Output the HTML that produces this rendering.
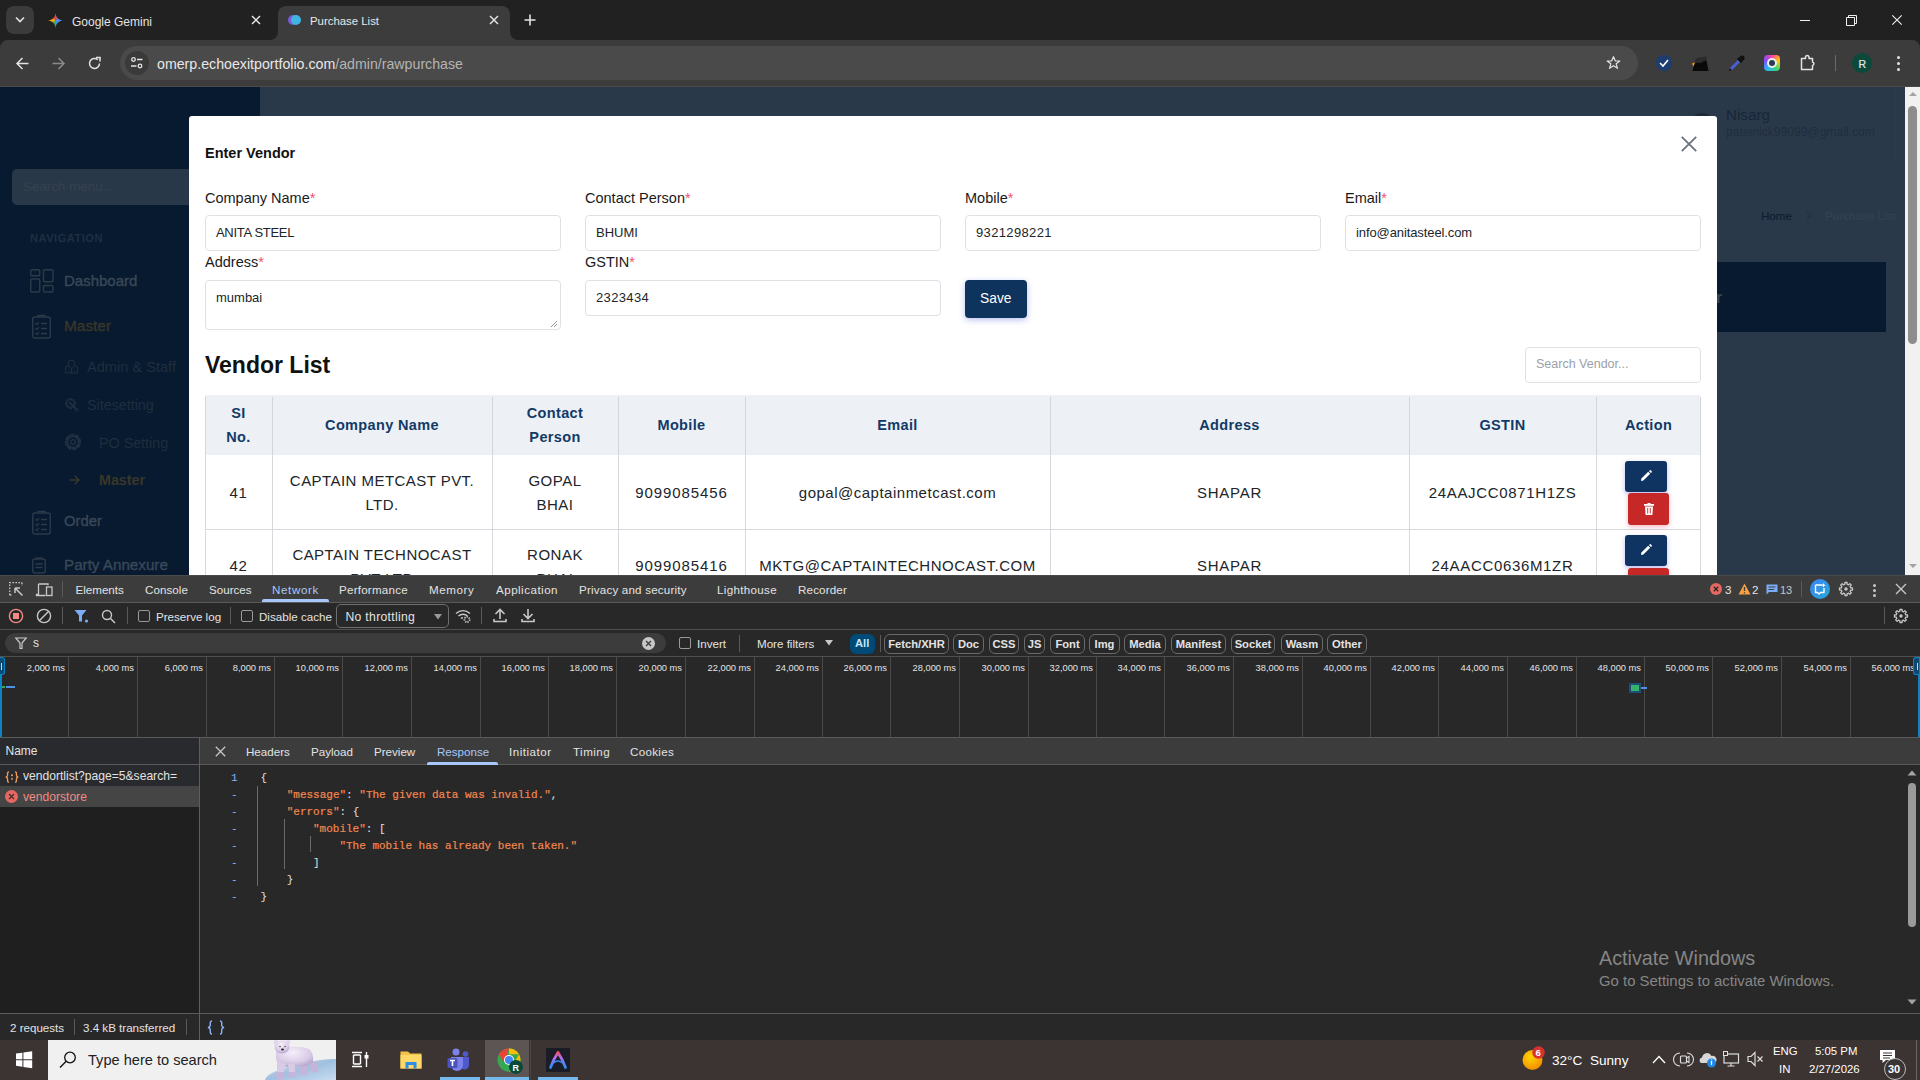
<!DOCTYPE html>
<html><head><meta charset="utf-8">
<style>
*{box-sizing:border-box;margin:0;padding:0}
html,body{width:1920px;height:1080px;overflow:hidden;background:#202120;font-family:"Liberation Sans",sans-serif}
.a{position:absolute}
.t{position:absolute;white-space:nowrap;line-height:1}
svg{position:absolute;overflow:visible}
.s{color:#f5874f;-webkit-text-stroke:0.2px #f5874f}
</style></head><body>
<!-- ============ CHROME TAB STRIP ============ -->
<div class="a" style="left:0;top:0;width:1920px;height:40px;background:#202120"></div>
<div class="a" style="left:6px;top:6px;width:28px;height:28px;border-radius:8px;background:#3b3b3b"></div>
<svg style="left:15px;top:16px" width="10" height="8"><path d="M1 1.5 L5 5.5 L9 1.5" stroke="#e3e3e3" stroke-width="1.6" fill="none"/></svg>
<!-- Gemini tab -->
<div class="a" style="left:48px;top:13px;width:15px;height:15px;background:conic-gradient(from 0deg,#e8453c 0deg,#4c8bf5 70deg,#4c8bf5 150deg,#34a853 200deg,#f6b400 270deg,#e8453c 340deg);clip-path:path('M7.5 0 C8 4.5 10.5 7 15 7.5 C10.5 8 8 10.5 7.5 15 C7 10.5 4.5 8 0 7.5 C4.5 7 7 4.5 7.5 0Z')"></div>
<div class="t" style="left:72px;top:15.5px;font-size:12px;color:#e3e3e3">Google Gemini</div>
<svg style="left:251px;top:15px" width="10" height="10"><path d="M1 1L9 9M9 1L1 9" stroke="#e3e3e3" stroke-width="1.5"/></svg>
<!-- active tab -->
<div class="a" style="left:278px;top:6px;width:232px;height:34px;background:#3c3c3c;border-radius:8px 8px 0 0"></div>
<div class="a" style="left:270px;top:32px;width:8px;height:8px;background:#3c3c3c"></div>
<div class="a" style="left:262px;top:24px;width:16px;height:16px;background:#202120;border-radius:0 0 8px 0"></div>
<div class="a" style="left:510px;top:32px;width:8px;height:8px;background:#3c3c3c"></div>
<div class="a" style="left:510px;top:24px;width:16px;height:16px;background:#202120;border-radius:0 0 0 8px"></div>
<div class="a" style="left:288px;top:15px;width:10px;height:10px;border-radius:50%;background:#7a5ad6"></div>
<div class="a" style="left:291px;top:15px;width:10px;height:10px;border-radius:50%;background:#3fb6e0"></div>
<div class="t" style="left:310px;top:15.5px;font-size:11.4px;color:#e8e8e8">Purchase List</div>
<svg style="left:489px;top:15px" width="10" height="10"><path d="M1 1L9 9M9 1L1 9" stroke="#e3e3e3" stroke-width="1.5"/></svg>
<svg style="left:524px;top:14px" width="12" height="12"><path d="M6 0.5V11.5M0.5 6H11.5" stroke="#e3e3e3" stroke-width="1.6"/></svg>
<!-- window controls -->
<div class="a" style="left:1800px;top:20px;width:10px;height:1px;background:#f0f0f0"></div>
<svg style="left:1846px;top:15px" width="11" height="11"><path d="M0.5 2.5H8.5V10.5H0.5Z M2.5 2.5V0.5H10.5V8.5H8.5" stroke="#f0f0f0" stroke-width="1" fill="none"/></svg>
<svg style="left:1892px;top:15px" width="10" height="10"><path d="M0.3 0.3L9.7 9.7M9.7 0.3L0.3 9.7" stroke="#f0f0f0" stroke-width="1.1"/></svg>
<!-- ============ TOOLBAR ============ -->
<div class="a" style="left:0;top:40px;width:1920px;height:47px;background:#3c3c3c;border-radius:8px 8px 0 0"></div>
<div class="a" style="left:0;top:86px;width:1920px;height:1px;background:#4a4a4a"></div>
<svg style="left:16px;top:57px" width="13" height="13"><path d="M12.5 6.5H1.5M6.5 1L1 6.5L6.5 12" stroke="#e3e3e3" stroke-width="1.5" fill="none"/></svg>
<svg style="left:52px;top:57px" width="13" height="13"><path d="M0.5 6.5H11.5M6.5 1L12 6.5L6.5 12" stroke="#8a8a8a" stroke-width="1.5" fill="none"/></svg>
<svg style="left:88px;top:57px" width="13" height="13"><path d="M11.5 6.5A5 5 0 1 1 9.8 2.7" stroke="#e3e3e3" stroke-width="1.5" fill="none"/><path d="M8 0.5H12V4.5" stroke="#e3e3e3" stroke-width="1.5" fill="none"/></svg>
<div class="a" style="left:120px;top:46px;width:1518px;height:34px;border-radius:17px;background:#4a4a4a"></div>
<div class="a" style="left:125px;top:51px;width:24px;height:24px;border-radius:50%;background:#3a3a3a"></div>
<svg style="left:130px;top:56px" width="14" height="14"><circle cx="3.5" cy="3.5" r="1.8" stroke="#e3e3e3" stroke-width="1.3" fill="none"/><path d="M7 3.5H12.5M1 10H6.5" stroke="#e3e3e3" stroke-width="1.5"/><circle cx="10" cy="10" r="1.8" stroke="#e3e3e3" stroke-width="1.3" fill="none"/></svg>
<div class="t" style="left:157px;top:56.5px;font-size:14.2px;color:#e8e8e8">omerp.echoexitportfolio.com<span style="color:#b4b4b4">/admin/rawpurchase</span></div>
<svg style="left:1605px;top:55px" width="17" height="16" viewBox="0 0 24 24"><path d="M12 2.5L14.8 9H21.5L16 13.2L18 20L12 16L6 20L8 13.2L2.5 9H9.2Z" stroke="#e3e3e3" stroke-width="1.8" fill="none" stroke-linejoin="round"/></svg>
<!-- extension icons -->
<div class="a" style="left:1656px;top:55px;width:16px;height:16px;border-radius:50%;background:#1d3d70"></div>
<svg style="left:1659px;top:59px" width="10" height="8"><path d="M1 4L4 7L9 1" stroke="#fff" stroke-width="1.6" fill="none"/></svg>
<svg style="left:1691px;top:54px" width="19" height="18"><path d="M4 8.5H11L13 6.5H15.5L17.5 17H1.5L3 11Z" fill="#0a0a0a"/><path d="M1 9.5L4 8.5L2.5 12.5Z" fill="#f39c12"/><path d="M4 9C4 5 6 3.5 9 3.5C11 3.5 12 2.5 15.5 2.5L16 6.5H13L11 8.5H4Z" fill="#2b2b2b"/></svg>
<svg style="left:1728px;top:54px" width="18" height="18"><path d="M2 16L11 7" stroke="#4a5fd6" stroke-width="3"/><path d="M1.5 16.5L3 15" stroke="#111" stroke-width="2"/><path d="M10 4L14 8" stroke="#111" stroke-width="3"/><circle cx="14" cy="4" r="2.6" fill="#111"/></svg>
<div class="a" style="left:1764px;top:55px;width:16px;height:16px;border-radius:4px;background:conic-gradient(#ff3fa4,#ffcc00,#37d67a,#29b6f6,#7c4dff,#ff3fa4)"></div>
<div class="a" style="left:1767px;top:58px;width:10px;height:10px;border-radius:50%;background:#eee"></div>
<div class="a" style="left:1769px;top:60px;width:6px;height:6px;border-radius:50%;background:#2b3a55"></div>
<svg style="left:1799px;top:54px" width="18" height="18"><path d="M2.5 4.5H6.5V3A1.8 1.8 0 0 1 10 3V4.5H13.5V8A1.8 1.8 0 0 1 13.5 11.5V15.5H2.5Z" stroke="#e3e3e3" stroke-width="1.5" fill="none" stroke-linejoin="round"/></svg>
<div class="a" style="left:1835px;top:55px;width:1px;height:16px;background:#6a6a6a"></div>
<div class="a" style="left:1852px;top:53px;width:20px;height:20px;border-radius:50%;background:#0b4a3a"></div>
<div class="t" style="left:1858.5px;top:59px;font-size:10.5px;color:#e6e6e6;-webkit-text-stroke:0.2px #e6e6e6">R</div>
<div class="a" style="left:1897px;top:56px;width:3px;height:3px;border-radius:50%;background:#e3e3e3"></div>
<div class="a" style="left:1897px;top:62px;width:3px;height:3px;border-radius:50%;background:#e3e3e3"></div>
<div class="a" style="left:1897px;top:68px;width:3px;height:3px;border-radius:50%;background:#e3e3e3"></div>

<!-- ============ PAGE ============ -->
<div id="page" class="a" style="left:0;top:87px;width:1920px;height:488px;background:#2a3949;overflow:hidden">
<!-- sidebar (coords relative to page top=87) -->
<div class="a" style="left:0;top:0;width:260px;height:488px;background:#071a2f"></div>
<div class="a" style="left:12px;top:82px;width:236px;height:36px;border-radius:5px;background:#293848"></div>
<div class="t" style="left:23px;top:93px;font-size:13.4px;color:#35434f">Search menu...</div>
<div class="t" style="left:30px;top:146px;font-size:11px;font-weight:700;letter-spacing:0.55px;color:#1f2f42">NAVIGATION</div>
<svg style="left:30px;top:182px" width="24" height="24"><rect x="0.75" y="0.75" width="9" height="6" rx="1.2" stroke="#2c3a4a" stroke-width="1.4" fill="none"/><rect x="13.5" y="0.75" width="9.5" height="12" rx="1.2" stroke="#2c3a4a" stroke-width="1.4" fill="none"/><rect x="0.75" y="10" width="9" height="13" rx="1.2" stroke="#2c3a4a" stroke-width="1.4" fill="none"/><rect x="13.5" y="16.5" width="9.5" height="6.5" rx="1.2" stroke="#2c3a4a" stroke-width="1.4" fill="none"/></svg>
<div class="t" style="left:64px;top:186px;font-size:15px;color:#3a4858;-webkit-text-stroke:0.35px #3a4858">Dashboard</div>
<svg style="left:32px;top:227px" width="20" height="25"><rect x="0.75" y="3" width="17.5" height="21" rx="2" stroke="#2c3a4a" stroke-width="1.4" fill="none"/><path d="M6 3V1.5H13V3" stroke="#2c3a4a" stroke-width="1.4" fill="none"/><path d="M3.5 9L5 10.5L7 8M3.5 14L5 15.5L7 13M3.5 19L5 20.5L7 18" stroke="#2c3a4a" stroke-width="1.2" fill="none"/><path d="M9 9.5H15M9 14.5H15M9 19.5H15" stroke="#2c3a4a" stroke-width="1.4"/></svg>
<div class="t" style="left:64px;top:231px;font-size:15.4px;color:#3a3629;-webkit-text-stroke:0.35px #3a3629">Master</div>
<svg style="left:65px;top:273px" width="13" height="14"><path d="M3.5 5V2.5A3 2.2 0 0 1 9.5 2.5V5" stroke="#1f2e3f" stroke-width="1.1" fill="none"/><path d="M0.6 13V7L3.5 5.5L6.5 9L9.5 5.5L12.4 7V13Z" stroke="#1f2e3f" stroke-width="1.1" fill="none" stroke-linejoin="round"/><path d="M6.5 9V13M3.5 10.5L5 12M9.5 10.5L8 12" stroke="#1f2e3f" stroke-width="1"/></svg>
<div class="t" style="left:87px;top:273px;font-size:14.6px;color:#1f2e3f">Admin &amp; Staff</div>
<svg style="left:65px;top:311px" width="14" height="14"><path d="M8.98 4.59 L10.42 4.62 L10.42 6.38 L8.98 6.41 L8.61 7.32 L9.60 8.36 L8.36 9.60 L7.32 8.61 L6.41 8.98 L6.38 10.42 L4.62 10.42 L4.59 8.98 L3.68 8.61 L2.64 9.60 L1.40 8.36 L2.39 7.32 L2.02 6.41 L0.58 6.38 L0.58 4.62 L2.02 4.59 L2.39 3.68 L1.40 2.64 L2.64 1.40 L3.68 2.39 L4.59 2.02 L4.62 0.58 L6.38 0.58 L6.41 2.02 L7.32 2.39 L8.36 1.40 L9.60 2.64 L8.61 3.68Z" stroke="#1f2e3f" stroke-width="1.3" fill="none" stroke-linejoin="round"/><path d="M4 4L11.5 11.5" stroke="#1f2e3f" stroke-width="2"/><circle cx="11.8" cy="11.8" r="1.6" stroke="#1f2e3f" stroke-width="1" fill="none"/></svg>
<div class="t" style="left:87px;top:311px;font-size:14.3px;color:#1f2e3f">Sitesetting</div>
<svg style="left:65px;top:347px" width="16" height="16"><path d="M14.71 4.43 L15.60 8.00 L13.48 9.16 L11.60 12.29 L15.27 10.22 L13.37 13.37 L11.05 12.70 L7.51 13.58 L11.57 14.71 L8.00 15.60 L6.84 13.48 L3.71 11.60 L5.78 15.27 L2.63 13.37 L3.30 11.05 L2.42 7.51 L1.29 11.57 L0.40 8.00 L2.52 6.84 L4.40 3.71 L0.73 5.78 L2.63 2.63 L4.95 3.30 L8.49 2.42 L4.43 1.29 L8.00 0.40 L9.16 2.52 L12.29 4.40 L10.22 0.73 L13.37 2.63 L12.70 4.95 L13.58 8.49Z" stroke="#233244" stroke-width="1.2" fill="none" stroke-linejoin="round"/><circle cx="8" cy="8" r="2.4" stroke="#233244" stroke-width="1.2" fill="none"/></svg>
<div class="t" style="left:99px;top:349px;font-size:14.3px;color:#1f2e3f">PO Setting</div>
<svg style="left:69px;top:388px" width="11" height="10"><path d="M0.5 5H10M5.5 0.8L10 5L5.5 9.2" stroke="#3a3629" stroke-width="1.4" fill="none"/></svg>
<div class="t" style="left:99px;top:386px;font-size:14.3px;font-weight:700;color:#3a3629">Master</div>
<svg style="left:32px;top:423px" width="20" height="25"><rect x="0.75" y="3" width="17.5" height="21" rx="2" stroke="#2c3a4a" stroke-width="1.4" fill="none"/><path d="M6 3V1.5H13V3" stroke="#2c3a4a" stroke-width="1.4" fill="none"/><path d="M3.5 9L5 10.5L7 8M3.5 14L5 15.5L7 13M3.5 19L5 20.5L7 18" stroke="#2c3a4a" stroke-width="1.2" fill="none"/><path d="M9 9.5H15M9 14.5H15M9 19.5H15" stroke="#2c3a4a" stroke-width="1.4"/></svg>
<div class="t" style="left:64px;top:427px;font-size:14.9px;color:#3a4858;-webkit-text-stroke:0.35px #3a4858">Order</div>
<svg style="left:32px;top:470px" width="14" height="17"><rect x="0.75" y="2" width="12.5" height="14" rx="2" stroke="#2c3a4a" stroke-width="1.4" fill="none"/><path d="M4 2V0.8H10V2M3.5 7H10.5M3.5 10.5H10.5" stroke="#2c3a4a" stroke-width="1.3" fill="none"/></svg>
<div class="t" style="left:64px;top:470px;font-size:15.2px;color:#3a4858;-webkit-text-stroke:0.35px #3a4858">Party Annexure</div>
<!-- main header -->
<div class="a" style="left:1690px;top:26px;width:24px;height:24px;border-radius:50%;background:#1c2a38"></div>
<div class="t" style="left:1726px;top:20px;font-size:15.2px;color:#17263a">Nisarg</div>
<div class="t" style="left:1726px;top:39px;font-size:12.1px;color:#1f2e40">patelnick99099@gmail.com</div>
<div class="a" style="left:260px;top:73px;width:1636px;height:1px;background:#283646"></div><div class="a" style="left:1895px;top:0px;width:1px;height:73px;background:#2c3a4a"></div>
<div class="t" style="left:1761px;top:123px;font-size:11.6px;color:#0e1d30;-webkit-text-stroke:0.2px #0e1d30">Home</div>
<svg style="left:1806px;top:124px" width="6" height="9"><path d="M1 1L5 4.5L1 8" stroke="#22313f" stroke-width="1.2" fill="none"/></svg>
<div class="t" style="left:1825px;top:123px;font-size:11.7px;color:#334353">Purchase List</div>
<div class="a" style="left:1600px;top:175px;width:286px;height:70px;background:#071a2f"></div>
<div class="t" style="left:1716px;top:203px;font-size:16px;font-weight:700;color:#384653">r</div>
<!-- page scrollbar -->
<div class="a" style="left:1905px;top:0;width:15px;height:488px;background:#f1f1f1"></div>
<svg style="left:1908px;top:4px" width="10" height="6"><path d="M1 5L5 1L9 5Z" fill="#a3a3a3"/></svg>
<div class="a" style="left:1908px;top:19px;width:9px;height:238px;border-radius:5px;background:#8d8d8d"></div>
<svg style="left:1908px;top:476px" width="10" height="6"><path d="M1 1L5 5L9 1Z" fill="#a3a3a3"/></svg>
<!-- ===== MODAL ===== -->
<div class="a" style="left:189px;top:29px;width:1528px;height:520px;background:#fff;border-radius:3px;overflow:hidden">
<div class="t" style="left:16px;top:29.5px;font-size:14.5px;font-weight:700;color:#111;letter-spacing:0px;">Enter Vendor</div>
<svg style="left:1492px;top:20px" width="16" height="16"><path d="M0.8 0.8L15.2 15.2M15.2 0.8L0.8 15.2" stroke="#6c757d" stroke-width="1.9"/></svg>
<div class="t" style="left:16px;top:75.4px;font-size:14.5px;font-weight:400;color:#1a1a1a;letter-spacing:0px;">Company Name<span style="color:#f0506e">*</span></div>
<div class="t" style="left:396px;top:75.4px;font-size:14.5px;font-weight:400;color:#1a1a1a;letter-spacing:0px;">Contact Person<span style="color:#f0506e">*</span></div>
<div class="t" style="left:776px;top:75.4px;font-size:14.5px;font-weight:400;color:#1a1a1a;letter-spacing:0px;">Mobile<span style="color:#f0506e">*</span></div>
<div class="t" style="left:1156px;top:75.4px;font-size:14.5px;font-weight:400;color:#1a1a1a;letter-spacing:0px;">Email<span style="color:#f0506e">*</span></div>
<div class="t" style="left:16px;top:139.4px;font-size:14.5px;font-weight:400;color:#1a1a1a;letter-spacing:0px;">Address<span style="color:#f0506e">*</span></div>
<div class="t" style="left:396px;top:139.4px;font-size:14.5px;font-weight:400;color:#1a1a1a;letter-spacing:0px;">GSTIN<span style="color:#f0506e">*</span></div>
<div class="a" style="left:16px;top:99px;width:356px;height:36px;border:1px solid #dee2e6;border-radius:4px;background:#fff"></div>
<div class="t" style="left:27px;top:110px;font-size:13px;font-weight:400;color:#212529;letter-spacing:-0.3px;">ANITA STEEL</div>
<div class="a" style="left:396px;top:99px;width:356px;height:36px;border:1px solid #dee2e6;border-radius:4px;background:#fff"></div>
<div class="t" style="left:407px;top:110px;font-size:13px;font-weight:400;color:#212529;letter-spacing:0px;">BHUMI</div>
<div class="a" style="left:776px;top:99px;width:356px;height:36px;border:1px solid #dee2e6;border-radius:4px;background:#fff"></div>
<div class="t" style="left:787px;top:110px;font-size:13px;font-weight:400;color:#212529;letter-spacing:0.35px;">9321298221</div>
<div class="a" style="left:1156px;top:99px;width:356px;height:36px;border:1px solid #dee2e6;border-radius:4px;background:#fff"></div>
<div class="t" style="left:1167px;top:110px;font-size:13px;font-weight:400;color:#212529;letter-spacing:-0.1px;">info@anitasteel.com</div>
<div class="a" style="left:396px;top:164px;width:356px;height:36px;border:1px solid #dee2e6;border-radius:4px;background:#fff"></div>
<div class="t" style="left:407px;top:175px;font-size:13px;font-weight:400;color:#212529;letter-spacing:0.35px;">2323434</div>
<div class="a" style="left:16px;top:164px;width:356px;height:50px;border:1px solid #dee2e6;border-radius:4px;background:#fff"></div>
<svg style="left:361px;top:204px" width="8" height="8"><path d="M7 1L1 7M7 4L4 7" stroke="#888" stroke-width="0.9"/></svg>
<div class="t" style="left:27px;top:175px;font-size:13px;font-weight:400;color:#212529;letter-spacing:0px;">mumbai</div>
<div class="a" style="left:776px;top:164px;width:62px;height:38px;border-radius:4px;background:#0e335d;box-shadow:0 2px 6px rgba(60,80,220,0.35)"></div>
<div class="t" style="left:791px;top:176px;font-size:13.8px;font-weight:400;color:#fff;letter-spacing:0px;">Save</div>
<div class="t" style="left:16px;top:237.5px;font-size:23px;font-weight:700;color:#111;letter-spacing:0px;">Vendor List</div>
<div class="a" style="left:1336px;top:231px;width:176px;height:36px;border:1px solid #dee2e6;border-radius:4px;background:#fff"></div>
<div class="t" style="left:1347px;top:242px;font-size:12.5px;font-weight:400;color:#9aa1a9;letter-spacing:0px;">Search Vendor...</div>
<div class="a" style="left:16px;top:279px;width:1495px;height:60px;background:#edf0f5"></div>
<div class="a" style="left:16px;top:281px;width:1px;height:58px;background:#d3d7dc"></div><div class="a" style="left:16px;top:339px;width:1px;height:240px;background:#d6d9dd"></div>
<div class="a" style="left:83px;top:281px;width:1px;height:58px;background:#d3d7dc"></div><div class="a" style="left:83px;top:339px;width:1px;height:240px;background:#d6d9dd"></div>
<div class="a" style="left:303px;top:281px;width:1px;height:58px;background:#d3d7dc"></div><div class="a" style="left:303px;top:339px;width:1px;height:240px;background:#d6d9dd"></div>
<div class="a" style="left:429px;top:281px;width:1px;height:58px;background:#d3d7dc"></div><div class="a" style="left:429px;top:339px;width:1px;height:240px;background:#d6d9dd"></div>
<div class="a" style="left:556px;top:281px;width:1px;height:58px;background:#d3d7dc"></div><div class="a" style="left:556px;top:339px;width:1px;height:240px;background:#d6d9dd"></div>
<div class="a" style="left:861px;top:281px;width:1px;height:58px;background:#d3d7dc"></div><div class="a" style="left:861px;top:339px;width:1px;height:240px;background:#d6d9dd"></div>
<div class="a" style="left:1220px;top:281px;width:1px;height:58px;background:#d3d7dc"></div><div class="a" style="left:1220px;top:339px;width:1px;height:240px;background:#d6d9dd"></div>
<div class="a" style="left:1407px;top:281px;width:1px;height:58px;background:#d3d7dc"></div><div class="a" style="left:1407px;top:339px;width:1px;height:240px;background:#d6d9dd"></div>
<div class="a" style="left:1511px;top:281px;width:1px;height:58px;background:#d3d7dc"></div><div class="a" style="left:1511px;top:339px;width:1px;height:240px;background:#d6d9dd"></div>
<div class="a" style="left:16px;top:413px;width:1495px;height:1px;background:#d6d9dd"></div>
<div class="t" style="left:16px;top:285px;width:67px;text-align:center;font-size:14.5px;line-height:24px;font-weight:700;color:#123a66;letter-spacing:0.35px">SI<br>No.</div>
<div class="t" style="left:83px;top:297px;width:220px;text-align:center;font-size:14.5px;line-height:24px;font-weight:700;color:#123a66;letter-spacing:0.35px">Company Name</div>
<div class="t" style="left:303px;top:285px;width:126px;text-align:center;font-size:14.5px;line-height:24px;font-weight:700;color:#123a66;letter-spacing:0.35px">Contact<br>Person</div>
<div class="t" style="left:429px;top:297px;width:127px;text-align:center;font-size:14.5px;line-height:24px;font-weight:700;color:#123a66;letter-spacing:0.35px">Mobile</div>
<div class="t" style="left:556px;top:297px;width:305px;text-align:center;font-size:14.5px;line-height:24px;font-weight:700;color:#123a66;letter-spacing:0.35px">Email</div>
<div class="t" style="left:861px;top:297px;width:359px;text-align:center;font-size:14.5px;line-height:24px;font-weight:700;color:#123a66;letter-spacing:0.35px">Address</div>
<div class="t" style="left:1220px;top:297px;width:187px;text-align:center;font-size:14.5px;line-height:24px;font-weight:700;color:#123a66;letter-spacing:0.35px">GSTIN</div>
<div class="t" style="left:1407px;top:297px;width:105px;text-align:center;font-size:14.5px;line-height:24px;font-weight:700;color:#123a66;letter-spacing:0.35px">Action</div>
<div class="t" style="left:16px;top:364.8px;width:67px;text-align:center;font-size:15px;line-height:24px;color:#212529;letter-spacing:0.6px">41</div>
<div class="t" style="left:83px;top:352.8px;width:220px;text-align:center;font-size:15px;line-height:24px;color:#212529;letter-spacing:0.45px">CAPTAIN METCAST PVT.<br>LTD.</div>
<div class="t" style="left:303px;top:352.8px;width:126px;text-align:center;font-size:15px;line-height:24px;color:#212529;letter-spacing:0.5px">GOPAL<br>BHAI</div>
<div class="t" style="left:429px;top:364.8px;width:127px;text-align:center;font-size:15px;line-height:24px;color:#212529;letter-spacing:0.9px">9099085456</div>
<div class="t" style="left:556px;top:364.8px;width:305px;text-align:center;font-size:15px;line-height:24px;color:#212529;letter-spacing:0.5px">gopal@captainmetcast.com</div>
<div class="t" style="left:861px;top:364.8px;width:359px;text-align:center;font-size:15px;line-height:24px;color:#212529;letter-spacing:0.75px">SHAPAR</div>
<div class="t" style="left:1220px;top:364.8px;width:187px;text-align:center;font-size:15px;line-height:24px;color:#212529;letter-spacing:0.67px">24AAJCC0871H1ZS</div>
<div class="t" style="left:16px;top:438.1px;width:67px;text-align:center;font-size:15px;line-height:24px;color:#212529;letter-spacing:0.6px">42</div>
<div class="t" style="left:83px;top:426.8px;width:220px;text-align:center;font-size:15px;line-height:24px;color:#212529;letter-spacing:0.45px">CAPTAIN TECHNOCAST<br>PVT LTD</div>
<div class="t" style="left:303px;top:426.8px;width:126px;text-align:center;font-size:15px;line-height:24px;color:#212529;letter-spacing:0.5px">RONAK<br>BHAI</div>
<div class="t" style="left:429px;top:438.1px;width:127px;text-align:center;font-size:15px;line-height:24px;color:#212529;letter-spacing:0.9px">9099085416</div>
<div class="t" style="left:556px;top:438.1px;width:305px;text-align:center;font-size:15px;line-height:24px;color:#212529;letter-spacing:0.5px">MKTG@CAPTAINTECHNOCAST.COM</div>
<div class="t" style="left:861px;top:438.1px;width:359px;text-align:center;font-size:15px;line-height:24px;color:#212529;letter-spacing:0.75px">SHAPAR</div>
<div class="t" style="left:1220px;top:438.1px;width:187px;text-align:center;font-size:15px;line-height:24px;color:#212529;letter-spacing:0.67px">24AACC0636M1ZR</div>
<div class="a" style="left:1436px;top:345px;width:42px;height:31px;border-radius:3px;background:#0f3461;box-shadow:0 2px 5px rgba(70,70,230,0.35)"></div>
<svg style="left:1451px;top:354px" width="12" height="12" viewBox="0 0 12 12"><path d="M1 11L1.4 8.6L8.2 1.8L10.2 3.8L3.4 10.6Z" fill="#fff"/><path d="M8.9 1.1L9.6 0.4A0.9 0.9 0 0 1 10.9 0.4L11.6 1.1A0.9 0.9 0 0 1 11.6 2.4L10.9 3.1Z" fill="#fff"/></svg>
<div class="a" style="left:1439px;top:377px;width:41px;height:32px;border-radius:3px;background:#c62828;box-shadow:0 2px 5px rgba(230,60,90,0.35)"></div>
<svg style="left:1455px;top:387px" width="10" height="12" viewBox="0 0 10 12"><rect x="0" y="1" width="10" height="1.8" fill="#fff"/><rect x="3.5" y="0" width="3" height="1.5" fill="#fff"/><path d="M1 3.4H9L8.4 12H1.6Z" fill="#fff"/><path d="M3.7 5V10.5M6.3 5V10.5" stroke="#c82828" stroke-width="0.9"/></svg>
<div class="a" style="left:1436px;top:419px;width:42px;height:31px;border-radius:3px;background:#0f3461;box-shadow:0 2px 5px rgba(70,70,230,0.35)"></div>
<svg style="left:1451px;top:428px" width="12" height="12" viewBox="0 0 12 12"><path d="M1 11L1.4 8.6L8.2 1.8L10.2 3.8L3.4 10.6Z" fill="#fff"/><path d="M8.9 1.1L9.6 0.4A0.9 0.9 0 0 1 10.9 0.4L11.6 1.1A0.9 0.9 0 0 1 11.6 2.4L10.9 3.1Z" fill="#fff"/></svg>
<div class="a" style="left:1439px;top:452px;width:41px;height:32px;border-radius:3px;background:#c62828;box-shadow:0 2px 5px rgba(230,60,90,0.35)"></div>
<svg style="left:1455px;top:462px" width="10" height="12" viewBox="0 0 10 12"><rect x="0" y="1" width="10" height="1.8" fill="#fff"/><rect x="3.5" y="0" width="3" height="1.5" fill="#fff"/><path d="M1 3.4H9L8.4 12H1.6Z" fill="#fff"/><path d="M3.7 5V10.5M6.3 5V10.5" stroke="#c82828" stroke-width="0.9"/></svg>
</div>
</div>

<!-- ============ DEVTOOLS ============ -->
<div id="dev" class="a" style="left:0;top:575px;width:1920px;height:465px;background:#282828"></div>
<div class="a" style="left:0px;top:575px;width:1920px;height:1px;background:#4a4a4a;"></div>
<div class="a" style="left:0px;top:576px;width:1920px;height:26px;background:#3c3c3c;"></div>
<div class="a" style="left:0px;top:602px;width:1920px;height:1px;background:#5a5a5a;"></div>
<div class="a" style="left:0px;top:603px;width:1920px;height:26px;background:#282828;"></div>
<div class="a" style="left:0px;top:629px;width:1920px;height:1px;background:#4f4f4f;"></div>
<div class="a" style="left:0px;top:630px;width:1920px;height:26px;background:#282828;"></div>
<div class="a" style="left:0px;top:656px;width:1920px;height:1px;background:#4f4f4f;"></div>
<div class="a" style="left:0px;top:657px;width:1920px;height:80px;background:#282828;"></div>
<div class="a" style="left:0px;top:737px;width:1920px;height:1px;background:#5a5a5a;"></div>
<svg style="left:9px;top:582px" width="15" height="15"><path d="M0.7 13V0.7H13" stroke="#c7c7c7" stroke-width="1.3" fill="none" stroke-dasharray="1.6 1.4"/><path d="M13 0.7V4M0.7 13H3" stroke="#c7c7c7" stroke-width="1.3" fill="none" stroke-dasharray="1.6 1.4"/><path d="M13.5 13.5L6 6M6 6V11M6 6H11" stroke="#c7c7c7" stroke-width="1.5" fill="none"/></svg>
<svg style="left:36px;top:583px" width="17" height="13"><path d="M2.5 1H12V2.3M2.5 1V11.5H0.5V12.5H9.5" stroke="#c7c7c7" stroke-width="1.3" fill="none"/><rect x="10.5" y="4" width="5.5" height="8.5" stroke="#c7c7c7" stroke-width="1.3" fill="none"/></svg>
<div class="a" style="left:62px;top:581px;width:1px;height:16px;background:#5a5a5a;"></div>
<div class="t" style="left:75.5px;top:584px;width:48.5px;font-size:11.6px;color:#e3e3e3;text-align:left">Elements</div>
<div class="t" style="left:145px;top:584px;width:43px;font-size:11.6px;letter-spacing:0.07px;color:#e3e3e3;text-align:left">Console</div>
<div class="t" style="left:209px;top:584px;width:42px;font-size:11.6px;color:#e3e3e3;text-align:left">Sources</div>
<div class="t" style="left:272px;top:584px;width:47px;font-size:11.6px;letter-spacing:0.64px;color:#a8c7fa;text-align:left">Network</div>
<div class="t" style="left:339px;top:584px;width:69px;font-size:11.6px;letter-spacing:0.23px;color:#e3e3e3;text-align:left">Performance</div>
<div class="t" style="left:429px;top:584px;width:46px;font-size:11.6px;letter-spacing:0.6px;color:#e3e3e3;text-align:left">Memory</div>
<div class="t" style="left:496px;top:584px;width:62px;font-size:11.6px;letter-spacing:0.48px;color:#e3e3e3;text-align:left">Application</div>
<div class="t" style="left:579px;top:584px;width:108px;font-size:11.6px;letter-spacing:0.2px;color:#e3e3e3;text-align:left">Privacy and security</div>
<div class="t" style="left:717px;top:584px;width:60px;font-size:11.6px;letter-spacing:0.33px;color:#e3e3e3;text-align:left">Lighthouse</div>
<div class="t" style="left:798px;top:584px;width:49px;font-size:11.6px;letter-spacing:0.16px;color:#e3e3e3;text-align:left">Recorder</div>
<div class="a" style="left:262px;top:599px;width:67px;height:3px;background:#a8c7fa;border-radius:2px 2px 0 0"></div>
<svg style="left:1710px;top:583px" width="12" height="12"><circle cx="6" cy="6" r="6" fill="#e46962"/><path d="M3.8 3.8L8.2 8.2M8.2 3.8L3.8 8.2" stroke="#282828" stroke-width="1.3"/></svg>
<div class="t" style="left:1725px;top:584px;font-size:11.6px;font-weight:400;color:#e3e3e3;letter-spacing:0px;font-family:'Liberation Sans';">3</div>
<svg style="left:1738px;top:583px" width="13" height="12"><path d="M6.5 0.5L12.5 11.5H0.5Z" fill="#f9a03f"/><path d="M6.5 4V8M6.5 9.3V10.5" stroke="#3c3c3c" stroke-width="1.3"/></svg>
<div class="t" style="left:1752px;top:584px;font-size:11.6px;font-weight:400;color:#e3e3e3;letter-spacing:0px;font-family:'Liberation Sans';">2</div>
<svg style="left:1766px;top:584px" width="12" height="11"><path d="M0.5 0.5H11.5V8H3L0.5 10.5Z" fill="#7cacf8"/><path d="M2.5 3H9.5M2.5 5.5H8" stroke="#3c3c3c" stroke-width="1"/></svg>
<div class="t" style="left:1780px;top:585px;font-size:11px;font-weight:400;color:#c7c7c7;letter-spacing:0px;font-family:'Liberation Sans';">13</div>
<div class="a" style="left:1801px;top:581px;width:1px;height:16px;background:#5a5a5a;"></div>
<div class="a" style="left:1810px;top:579px;width:20px;height:20px;border-radius:50%;background:linear-gradient(135deg,#3b82f6,#28a9d6)"></div>
<svg style="left:1814px;top:583px" width="12" height="13"><path d="M1.5 2H8M10 5V9.5H6.5L5 11L3.5 9.5H1.5V2" stroke="#fff" stroke-width="1.4" fill="none" stroke-linejoin="round"/><path d="M9.5 0L10.2 1.6L11.8 2.3L10.2 3L9.5 4.6L8.8 3L7.2 2.3L8.8 1.6Z" fill="#fff"/></svg>
<svg style="left:1839px;top:582px" width="14" height="14"><path d="M5.89 2.23 L5.92 0.49 L8.08 0.49 L8.11 2.23 L9.59 2.84 L10.84 1.63 L12.37 3.16 L11.16 4.41 L11.77 5.89 L13.51 5.92 L13.51 8.08 L11.77 8.11 L11.16 9.59 L12.37 10.84 L10.84 12.37 L9.59 11.16 L8.11 11.77 L8.08 13.51 L5.92 13.51 L5.89 11.77 L4.41 11.16 L3.16 12.37 L1.63 10.84 L2.84 9.59 L2.23 8.11 L0.49 8.08 L0.49 5.92 L2.23 5.89 L2.84 4.41 L1.63 3.16 L3.16 1.63 L4.41 2.84Z" stroke="#c7c7c7" stroke-width="1.3" fill="none" stroke-linejoin="round"/><circle cx="7" cy="7" r="1.7" fill="#c7c7c7"/></svg>
<div class="a" style="left:1873px;top:584px;width:3px;height:3px;background:#c7c7c7;border-radius:50%"></div>
<div class="a" style="left:1873px;top:589px;width:3px;height:3px;background:#c7c7c7;border-radius:50%"></div>
<div class="a" style="left:1873px;top:594px;width:3px;height:3px;background:#c7c7c7;border-radius:50%"></div>
<svg style="left:1895px;top:583px" width="12" height="12"><path d="M1 1L11 11M11 1L1 11" stroke="#c7c7c7" stroke-width="1.4"/></svg>
<svg style="left:8px;top:608px" width="16" height="16"><circle cx="8" cy="8" r="6.6" stroke="#f28b82" stroke-width="1.4" fill="none"/><rect x="5" y="5" width="6" height="6" fill="#f28b82"/></svg>
<svg style="left:36px;top:608px" width="16" height="16"><circle cx="8" cy="8" r="6.6" stroke="#c7c7c7" stroke-width="1.4" fill="none"/><path d="M3.5 12.5L12.5 3.5" stroke="#c7c7c7" stroke-width="1.4"/></svg>
<div class="a" style="left:62px;top:607px;width:1px;height:17px;background:#5a5a5a;"></div>
<svg style="left:74px;top:609px" width="15" height="15"><path d="M0.5 1H12.5L8 6.5V12.5H5V6.5Z" fill="#7cacf8"/><circle cx="12.5" cy="12" r="1.6" fill="#7cacf8"/></svg>
<svg style="left:101px;top:609px" width="16" height="16"><circle cx="6" cy="6" r="4.5" stroke="#c7c7c7" stroke-width="1.4" fill="none"/><path d="M9.3 9.3L14 14" stroke="#c7c7c7" stroke-width="1.5"/></svg>
<div class="a" style="left:127px;top:607px;width:1px;height:17px;background:#5a5a5a;"></div>
<div class="a" style="left:138px;top:610px;width:12px;height:12px;background:transparent;border:1px solid #9a9a9a;border-radius:2px"></div>
<div class="t" style="left:156px;top:611px;font-size:11.6px;font-weight:400;color:#e3e3e3;letter-spacing:0px;font-family:'Liberation Sans';">Preserve log</div>
<div class="a" style="left:230px;top:607px;width:1px;height:17px;background:#5a5a5a;"></div>
<div class="a" style="left:241px;top:610px;width:12px;height:12px;background:transparent;border:1px solid #9a9a9a;border-radius:2px"></div>
<div class="t" style="left:259px;top:611px;font-size:11.6px;font-weight:400;color:#e3e3e3;letter-spacing:0px;font-family:'Liberation Sans';">Disable cache</div>
<div class="a" style="left:336px;top:604px;width:113px;height:24px;background:transparent;border:1px solid #6f6f6f;border-radius:5px"></div>
<div class="t" style="left:345.5px;top:611px;font-size:12.2px;font-weight:400;color:#e3e3e3;letter-spacing:0.3px;font-family:'Liberation Sans';">No throttling</div>
<svg style="left:434px;top:614px" width="8" height="6"><path d="M0 0H8L4 5.5Z" fill="#9a9a9a"/></svg>
<svg style="left:455px;top:609px" width="17" height="14"><path d="M1 4.5A10 10 0 0 1 15 4.5M3.5 7A6.5 6.5 0 0 1 12.5 7M6 9.5A3 3 0 0 1 8 8.8" stroke="#c7c7c7" stroke-width="1.4" fill="none"/><circle cx="12" cy="10.5" r="2.6" stroke="#c7c7c7" stroke-width="1.8" stroke-dasharray="1.3 1" fill="none"/></svg>
<div class="a" style="left:481px;top:607px;width:1px;height:17px;background:#5a5a5a;"></div>
<svg style="left:493px;top:608px" width="14" height="15"><path d="M7 11V1.5M2.5 6L7 1.5L11.5 6" stroke="#c7c7c7" stroke-width="1.6" fill="none"/><path d="M1 11V13.5H13V11" stroke="#c7c7c7" stroke-width="1.6" fill="none"/></svg>
<svg style="left:521px;top:608px" width="14" height="15"><path d="M7 1V10.5M2.5 6L7 10.5L11.5 6" stroke="#c7c7c7" stroke-width="1.6" fill="none"/><path d="M1 11V13.5H13V11" stroke="#c7c7c7" stroke-width="1.6" fill="none"/></svg>
<div class="a" style="left:1884px;top:607px;width:1px;height:17px;background:#5a5a5a;"></div>
<svg style="left:1894px;top:609px" width="14" height="14"><path d="M5.89 2.23 L5.92 0.49 L8.08 0.49 L8.11 2.23 L9.59 2.84 L10.84 1.63 L12.37 3.16 L11.16 4.41 L11.77 5.89 L13.51 5.92 L13.51 8.08 L11.77 8.11 L11.16 9.59 L12.37 10.84 L10.84 12.37 L9.59 11.16 L8.11 11.77 L8.08 13.51 L5.92 13.51 L5.89 11.77 L4.41 11.16 L3.16 12.37 L1.63 10.84 L2.84 9.59 L2.23 8.11 L0.49 8.08 L0.49 5.92 L2.23 5.89 L2.84 4.41 L1.63 3.16 L3.16 1.63 L4.41 2.84Z" stroke="#c7c7c7" stroke-width="1.3" fill="none" stroke-linejoin="round"/><circle cx="7" cy="7" r="1.7" fill="#c7c7c7"/></svg>
<div class="a" style="left:5px;top:633px;width:661px;height:20px;background:#3c3c3c;border-radius:10px"></div>
<svg style="left:15px;top:637px" width="12" height="12"><path d="M0.8 1H11.2L7 6V11.5H5V6Z" stroke="#c7c7c7" stroke-width="1.2" fill="none"/></svg>
<div class="t" style="left:33px;top:637px;font-size:12px;font-weight:400;color:#e3e3e3;letter-spacing:0px;font-family:'Liberation Sans';">s</div>
<svg style="left:642px;top:637px" width="13" height="13"><circle cx="6.5" cy="6.5" r="6.5" fill="#c7c7c7"/><path d="M4 4L9 9M9 4L4 9" stroke="#3c3c3c" stroke-width="1.4"/></svg>
<div class="a" style="left:679px;top:637px;width:12px;height:12px;background:transparent;border:1px solid #9a9a9a;border-radius:2px"></div>
<div class="t" style="left:697px;top:638px;font-size:11.6px;font-weight:400;color:#e3e3e3;letter-spacing:0px;font-family:'Liberation Sans';">Invert</div>
<div class="a" style="left:739px;top:635px;width:1px;height:17px;background:#5a5a5a;"></div>
<div class="t" style="left:757px;top:638px;font-size:11.6px;font-weight:400;color:#e3e3e3;letter-spacing:0px;font-family:'Liberation Sans';">More filters</div>
<svg style="left:825px;top:640px" width="8" height="6"><path d="M0 0H8L4 5.5Z" fill="#c7c7c7"/></svg>
<div class="a" style="left:850px;top:634px;width:25px;height:20px;border-radius:6px;background:#004a77"></div>
<div class="t" style="left:855px;top:638px;font-size:11.2px;font-weight:700;color:#c2e7ff;letter-spacing:0px;font-family:'Liberation Sans';">All</div>
<div class="a" style="left:880px;top:635px;width:1px;height:17px;background:#5a5a5a;"></div>
<div class="t" style="left:884px;top:634px;width:65px;height:20px;line-height:18px;text-align:center;border:1px solid #6a6a6a;border-radius:6px;font-size:11.2px;font-weight:700;color:#e3e3e3">Fetch/XHR</div>
<div class="t" style="left:953px;top:634px;width:31px;height:20px;line-height:18px;text-align:center;border:1px solid #6a6a6a;border-radius:6px;font-size:11.2px;font-weight:700;color:#e3e3e3">Doc</div>
<div class="t" style="left:989px;top:634px;width:30px;height:20px;line-height:18px;text-align:center;border:1px solid #6a6a6a;border-radius:6px;font-size:11.2px;font-weight:700;color:#e3e3e3">CSS</div>
<div class="t" style="left:1024px;top:634px;width:21px;height:20px;line-height:18px;text-align:center;border:1px solid #6a6a6a;border-radius:6px;font-size:11.2px;font-weight:700;color:#e3e3e3">JS</div>
<div class="t" style="left:1050px;top:634px;width:35px;height:20px;line-height:18px;text-align:center;border:1px solid #6a6a6a;border-radius:6px;font-size:11.2px;font-weight:700;color:#e3e3e3">Font</div>
<div class="t" style="left:1089px;top:634px;width:31px;height:20px;line-height:18px;text-align:center;border:1px solid #6a6a6a;border-radius:6px;font-size:11.2px;font-weight:700;color:#e3e3e3">Img</div>
<div class="t" style="left:1124px;top:634px;width:42px;height:20px;line-height:18px;text-align:center;border:1px solid #6a6a6a;border-radius:6px;font-size:11.2px;font-weight:700;color:#e3e3e3">Media</div>
<div class="t" style="left:1171px;top:634px;width:55px;height:20px;line-height:18px;text-align:center;border:1px solid #6a6a6a;border-radius:6px;font-size:11.2px;font-weight:700;color:#e3e3e3">Manifest</div>
<div class="t" style="left:1231px;top:634px;width:44px;height:20px;line-height:18px;text-align:center;border:1px solid #6a6a6a;border-radius:6px;font-size:11.2px;font-weight:700;color:#e3e3e3">Socket</div>
<div class="t" style="left:1281px;top:634px;width:42px;height:20px;line-height:18px;text-align:center;border:1px solid #6a6a6a;border-radius:6px;font-size:11.2px;font-weight:700;color:#e3e3e3">Wasm</div>
<div class="t" style="left:1327px;top:634px;width:40px;height:20px;line-height:18px;text-align:center;border:1px solid #6a6a6a;border-radius:6px;font-size:11.2px;font-weight:700;color:#e3e3e3">Other</div>
<div class="a" style="left:68px;top:657px;width:1px;height:80px;background:#4a4a4a"></div>
<div class="t" style="left:8px;top:664px;width:57px;text-align:right;font-size:9.3px;color:#e3e3e3">2,000 ms</div>
<div class="a" style="left:137px;top:657px;width:1px;height:80px;background:#4a4a4a"></div>
<div class="t" style="left:77px;top:664px;width:57px;text-align:right;font-size:9.3px;color:#e3e3e3">4,000 ms</div>
<div class="a" style="left:206px;top:657px;width:1px;height:80px;background:#4a4a4a"></div>
<div class="t" style="left:146px;top:664px;width:57px;text-align:right;font-size:9.3px;color:#e3e3e3">6,000 ms</div>
<div class="a" style="left:274px;top:657px;width:1px;height:80px;background:#4a4a4a"></div>
<div class="t" style="left:214px;top:664px;width:57px;text-align:right;font-size:9.3px;color:#e3e3e3">8,000 ms</div>
<div class="a" style="left:342px;top:657px;width:1px;height:80px;background:#4a4a4a"></div>
<div class="t" style="left:282px;top:664px;width:57px;text-align:right;font-size:9.3px;color:#e3e3e3">10,000 ms</div>
<div class="a" style="left:411px;top:657px;width:1px;height:80px;background:#4a4a4a"></div>
<div class="t" style="left:351px;top:664px;width:57px;text-align:right;font-size:9.3px;color:#e3e3e3">12,000 ms</div>
<div class="a" style="left:480px;top:657px;width:1px;height:80px;background:#4a4a4a"></div>
<div class="t" style="left:420px;top:664px;width:57px;text-align:right;font-size:9.3px;color:#e3e3e3">14,000 ms</div>
<div class="a" style="left:548px;top:657px;width:1px;height:80px;background:#4a4a4a"></div>
<div class="t" style="left:488px;top:664px;width:57px;text-align:right;font-size:9.3px;color:#e3e3e3">16,000 ms</div>
<div class="a" style="left:616px;top:657px;width:1px;height:80px;background:#4a4a4a"></div>
<div class="t" style="left:556px;top:664px;width:57px;text-align:right;font-size:9.3px;color:#e3e3e3">18,000 ms</div>
<div class="a" style="left:685px;top:657px;width:1px;height:80px;background:#4a4a4a"></div>
<div class="t" style="left:625px;top:664px;width:57px;text-align:right;font-size:9.3px;color:#e3e3e3">20,000 ms</div>
<div class="a" style="left:754px;top:657px;width:1px;height:80px;background:#4a4a4a"></div>
<div class="t" style="left:694px;top:664px;width:57px;text-align:right;font-size:9.3px;color:#e3e3e3">22,000 ms</div>
<div class="a" style="left:822px;top:657px;width:1px;height:80px;background:#4a4a4a"></div>
<div class="t" style="left:762px;top:664px;width:57px;text-align:right;font-size:9.3px;color:#e3e3e3">24,000 ms</div>
<div class="a" style="left:890px;top:657px;width:1px;height:80px;background:#4a4a4a"></div>
<div class="t" style="left:830px;top:664px;width:57px;text-align:right;font-size:9.3px;color:#e3e3e3">26,000 ms</div>
<div class="a" style="left:959px;top:657px;width:1px;height:80px;background:#4a4a4a"></div>
<div class="t" style="left:899px;top:664px;width:57px;text-align:right;font-size:9.3px;color:#e3e3e3">28,000 ms</div>
<div class="a" style="left:1028px;top:657px;width:1px;height:80px;background:#4a4a4a"></div>
<div class="t" style="left:968px;top:664px;width:57px;text-align:right;font-size:9.3px;color:#e3e3e3">30,000 ms</div>
<div class="a" style="left:1096px;top:657px;width:1px;height:80px;background:#4a4a4a"></div>
<div class="t" style="left:1036px;top:664px;width:57px;text-align:right;font-size:9.3px;color:#e3e3e3">32,000 ms</div>
<div class="a" style="left:1164px;top:657px;width:1px;height:80px;background:#4a4a4a"></div>
<div class="t" style="left:1104px;top:664px;width:57px;text-align:right;font-size:9.3px;color:#e3e3e3">34,000 ms</div>
<div class="a" style="left:1233px;top:657px;width:1px;height:80px;background:#4a4a4a"></div>
<div class="t" style="left:1173px;top:664px;width:57px;text-align:right;font-size:9.3px;color:#e3e3e3">36,000 ms</div>
<div class="a" style="left:1302px;top:657px;width:1px;height:80px;background:#4a4a4a"></div>
<div class="t" style="left:1242px;top:664px;width:57px;text-align:right;font-size:9.3px;color:#e3e3e3">38,000 ms</div>
<div class="a" style="left:1370px;top:657px;width:1px;height:80px;background:#4a4a4a"></div>
<div class="t" style="left:1310px;top:664px;width:57px;text-align:right;font-size:9.3px;color:#e3e3e3">40,000 ms</div>
<div class="a" style="left:1438px;top:657px;width:1px;height:80px;background:#4a4a4a"></div>
<div class="t" style="left:1378px;top:664px;width:57px;text-align:right;font-size:9.3px;color:#e3e3e3">42,000 ms</div>
<div class="a" style="left:1507px;top:657px;width:1px;height:80px;background:#4a4a4a"></div>
<div class="t" style="left:1447px;top:664px;width:57px;text-align:right;font-size:9.3px;color:#e3e3e3">44,000 ms</div>
<div class="a" style="left:1576px;top:657px;width:1px;height:80px;background:#4a4a4a"></div>
<div class="t" style="left:1516px;top:664px;width:57px;text-align:right;font-size:9.3px;color:#e3e3e3">46,000 ms</div>
<div class="a" style="left:1644px;top:657px;width:1px;height:80px;background:#4a4a4a"></div>
<div class="t" style="left:1584px;top:664px;width:57px;text-align:right;font-size:9.3px;color:#e3e3e3">48,000 ms</div>
<div class="a" style="left:1712px;top:657px;width:1px;height:80px;background:#4a4a4a"></div>
<div class="t" style="left:1652px;top:664px;width:57px;text-align:right;font-size:9.3px;color:#e3e3e3">50,000 ms</div>
<div class="a" style="left:1781px;top:657px;width:1px;height:80px;background:#4a4a4a"></div>
<div class="t" style="left:1721px;top:664px;width:57px;text-align:right;font-size:9.3px;color:#e3e3e3">52,000 ms</div>
<div class="a" style="left:1850px;top:657px;width:1px;height:80px;background:#4a4a4a"></div>
<div class="t" style="left:1790px;top:664px;width:57px;text-align:right;font-size:9.3px;color:#e3e3e3">54,000 ms</div>
<div class="t" style="left:1858px;top:664px;width:57px;text-align:right;font-size:9.3px;color:#e3e3e3">56,000 ms</div>
<div class="a" style="left:0px;top:657px;width:2px;height:80px;background:#0a84c8;"></div>
<div class="a" style="left:0px;top:657px;width:5px;height:18px;background:#0b4a72;border:1px solid #0a84c8;border-left:none;border-radius:0 3px 3px 0"></div><div class="a" style="left:1px;top:663px;width:1px;height:7px;background:#c0d8f0"></div>
<div class="a" style="left:1918px;top:657px;width:2px;height:80px;background:#0a84c8;"></div>
<div class="a" style="left:1913px;top:657px;width:6px;height:18px;background:#0b4a72;border:1px solid #0a84c8;border-right:none;border-radius:3px 0 0 3px"></div><div class="a" style="left:1917px;top:663px;width:1px;height:7px;background:#c0d8f0"></div>
<div class="a" style="left:2px;top:686px;width:3px;height:2px;background:#34a853;"></div>
<div class="a" style="left:6px;top:686px;width:9px;height:2px;background:#4f8fe8;"></div>
<div class="a" style="left:1629px;top:683px;width:12px;height:10px;background:#1b4f7a;"></div>
<div class="a" style="left:1631px;top:685px;width:8px;height:6px;background:#35b36b;"></div>
<div class="a" style="left:1641px;top:687px;width:6px;height:2px;background:#4f8fe8;"></div>
<div class="a" style="left:0px;top:738px;width:199px;height:26px;background:#292a2d;"></div>
<div class="a" style="left:200px;top:738px;width:1720px;height:26px;background:#3c3c3c;"></div>
<div class="a" style="left:0px;top:764px;width:1920px;height:1px;background:#5a5a5a;"></div>
<div class="t" style="left:5.5px;top:745px;font-size:12px;font-weight:400;color:#e3e3e3;letter-spacing:0px;font-family:'Liberation Sans';">Name</div>
<svg style="left:215px;top:746px" width="11" height="11"><path d="M0.8 0.8L10.2 10.2M10.2 0.8L0.8 10.2" stroke="#c7c7c7" stroke-width="1.3"/></svg>
<div class="t" style="left:246px;top:746px;font-size:11.6px;font-weight:400;color:#e3e3e3;letter-spacing:0px;font-family:'Liberation Sans';">Headers</div>
<div class="t" style="left:311px;top:746px;font-size:11.6px;font-weight:400;color:#e3e3e3;letter-spacing:0px;font-family:'Liberation Sans';">Payload</div>
<div class="t" style="left:374px;top:746px;font-size:11.6px;font-weight:400;color:#e3e3e3;letter-spacing:0px;font-family:'Liberation Sans';">Preview</div>
<div class="t" style="left:437px;top:746px;font-size:11.6px;font-weight:400;color:#a8c7fa;letter-spacing:0px;font-family:'Liberation Sans';">Response</div>
<div class="t" style="left:509px;top:746px;font-size:11.6px;font-weight:400;color:#e3e3e3;letter-spacing:0.5px;font-family:'Liberation Sans';">Initiator</div>
<div class="t" style="left:573px;top:746px;font-size:11.6px;font-weight:400;color:#e3e3e3;letter-spacing:0.45px;font-family:'Liberation Sans';">Timing</div>
<div class="t" style="left:630px;top:746px;font-size:11.6px;font-weight:400;color:#e3e3e3;letter-spacing:0.3px;font-family:'Liberation Sans';">Cookies</div>
<div class="a" style="left:427px;top:762px;width:71px;height:3px;background:#a8c7fa;border-radius:2px 2px 0 0"></div>
<div class="a" style="left:0px;top:765px;width:199px;height:21px;background:#292a2d;"></div>
<div class="a" style="left:0px;top:786px;width:199px;height:21px;background:#454545;"></div>
<div class="a" style="left:0px;top:807px;width:199px;height:206px;background:#1f1f1f;"></div>
<svg style="left:5px;top:771px" width="14" height="12"><path d="M4 0.8C2.2 0.8 2.6 2.5 2.6 4C2.6 5.3 1.8 5.8 0.8 6C1.8 6.2 2.6 6.7 2.6 8C2.6 9.5 2.2 11.2 4 11.2M10 0.8C11.8 0.8 11.4 2.5 11.4 4C11.4 5.3 12.2 5.8 13.2 6C12.2 6.2 11.4 6.7 11.4 8C11.4 9.5 11.8 11.2 10 11.2" stroke="#f29b5a" stroke-width="1.3" fill="none"/><circle cx="7" cy="4.2" r="1" fill="#f29b5a"/><path d="M7 6.8V9" stroke="#f29b5a" stroke-width="1.3"/></svg>
<div class="t" style="left:23px;top:770px;font-size:12.1px;font-weight:400;color:#e3e3e3;letter-spacing:0px;font-family:'Liberation Sans';">vendortlist?page=5&amp;search=</div>
<svg style="left:5px;top:790px" width="13" height="13"><circle cx="6.5" cy="6.5" r="6.5" fill="#e46962"/><path d="M4 4L9 9M9 4L4 9" stroke="#4a2a2a" stroke-width="1.3"/></svg>
<div class="t" style="left:23px;top:791px;font-size:12.1px;font-weight:400;color:#f28b82;letter-spacing:0px;font-family:'Liberation Sans';">vendorstore</div>
<div class="a" style="left:199px;top:738px;width:1px;height:302px;background:#5e5e5e;"></div>
<div class="a" style="left:200px;top:765px;width:1720px;height:248px;background:#282828;"></div>
<div class="t" style="left:231px;top:773.1px;font-size:11px;color:#8ab4f8;font-family:'Liberation Mono'">1</div>
<div class="t" style="left:260.4px;top:773.1px;font-size:11px;color:#e3e3e3;font-family:'Liberation Mono'">{</div>
<div class="t" style="left:231px;top:790.1px;font-size:11px;color:#8ab4f8;font-family:'Liberation Mono'">-</div>
<div class="t" style="left:286.7px;top:790.1px;font-size:11px;color:#e3e3e3;font-family:'Liberation Mono'"><span class="s">"message"</span>: <span class="s">"The given data was invalid."</span>,</div>
<div class="t" style="left:231px;top:807.0px;font-size:11px;color:#8ab4f8;font-family:'Liberation Mono'">-</div>
<div class="t" style="left:286.7px;top:807.0px;font-size:11px;color:#e3e3e3;font-family:'Liberation Mono'"><span class="s">"errors"</span>: {</div>
<div class="t" style="left:231px;top:824.0px;font-size:11px;color:#8ab4f8;font-family:'Liberation Mono'">-</div>
<div class="t" style="left:313.0px;top:824.0px;font-size:11px;color:#e3e3e3;font-family:'Liberation Mono'"><span class="s">"mobile"</span>: [</div>
<div class="t" style="left:231px;top:840.9px;font-size:11px;color:#8ab4f8;font-family:'Liberation Mono'">-</div>
<div class="t" style="left:339.4px;top:840.9px;font-size:11px;color:#e3e3e3;font-family:'Liberation Mono'"><span class="s">"The mobile has already been taken."</span></div>
<div class="t" style="left:231px;top:857.9px;font-size:11px;color:#8ab4f8;font-family:'Liberation Mono'">-</div>
<div class="t" style="left:313.0px;top:857.9px;font-size:11px;color:#e3e3e3;font-family:'Liberation Mono'">]</div>
<div class="t" style="left:231px;top:874.9px;font-size:11px;color:#8ab4f8;font-family:'Liberation Mono'">-</div>
<div class="t" style="left:286.7px;top:874.9px;font-size:11px;color:#e3e3e3;font-family:'Liberation Mono'">}</div>
<div class="t" style="left:231px;top:891.8px;font-size:11px;color:#8ab4f8;font-family:'Liberation Mono'">-</div>
<div class="t" style="left:260.4px;top:891.8px;font-size:11px;color:#e3e3e3;font-family:'Liberation Mono'">}</div>
<div class="a" style="left:257px;top:786px;width:1px;height:100px;background:#6a6a6a;"></div>
<div class="a" style="left:284px;top:819px;width:1px;height:50px;background:#6a6a6a;"></div>
<div class="a" style="left:310px;top:836px;width:1px;height:16px;background:#6a6a6a;"></div>
<svg style="left:1907px;top:770px" width="10" height="6"><path d="M0.5 5.5L5 0.5L9.5 5.5Z" fill="#a3a3a3"/></svg>
<div class="a" style="left:1908px;top:783px;width:8px;height:144px;background:#9a9a9a;border-radius:4px"></div>
<svg style="left:1907px;top:999px" width="10" height="6"><path d="M0.5 0.5L5 5.5L9.5 0.5Z" fill="#a3a3a3"/></svg>
<div class="t" style="left:1599px;top:948.5px;font-size:19.8px;font-weight:400;color:#868686;letter-spacing:0px;font-family:'Liberation Sans';">Activate Windows</div>
<div class="t" style="left:1599px;top:974px;font-size:14.9px;font-weight:400;color:#868686;letter-spacing:0px;font-family:'Liberation Sans';">Go to Settings to activate Windows.</div>
<div class="a" style="left:0px;top:1013px;width:1920px;height:1px;background:#5a5a5a;"></div>
<div class="a" style="left:0px;top:1014px;width:1920px;height:26px;background:#282828;"></div>
<div class="a" style="left:199px;top:1014px;width:1px;height:26px;background:#5e5e5e;"></div>
<div class="t" style="left:10px;top:1022px;font-size:11.6px;font-weight:400;color:#e3e3e3;letter-spacing:0px;font-family:'Liberation Sans';">2 requests</div>
<div class="a" style="left:74px;top:1019px;width:1px;height:16px;background:#5a5a5a;"></div>
<div class="t" style="left:83px;top:1022px;font-size:11.6px;font-weight:400;color:#e3e3e3;letter-spacing:0px;font-family:'Liberation Sans';">3.4 kB transferred</div>
<div class="a" style="left:186px;top:1019px;width:1px;height:16px;background:#5a5a5a;"></div>
<svg style="left:207px;top:1020px" width="18" height="15"><path d="M5 1C2.8 1 3.3 3.3 3.3 5.2C3.3 6.6 2.4 7.2 1 7.5C2.4 7.8 3.3 8.4 3.3 9.8C3.3 11.7 2.8 14 5 14M13 1C15.2 1 14.7 3.3 14.7 5.2C14.7 6.6 15.6 7.2 17 7.5C15.6 7.8 14.7 8.4 14.7 9.8C14.7 11.7 15.2 14 13 14" stroke="#8ab4f8" stroke-width="1.4" fill="none"/></svg>

<!-- ============ TASKBAR ============ -->
<div class="a" style="left:0px;top:1040px;width:1920px;height:40px;background:#3b3433;"></div>
<svg style="left:16px;top:1051px" width="17" height="18"><path d="M0 2.6L6.4 1.7V8.2H0Z M7.4 1.6L16.2 0.3V8.2H7.4Z M0 9.2H6.4V15.7L0 14.8Z M7.4 9.2H16.2V17.2L7.4 15.9Z" fill="#fff"/></svg>
<div class="a" style="left:48px;top:1040px;width:288px;height:40px;background:#f0f0f0;"></div>
<svg style="left:59px;top:1051px" width="18" height="18"><circle cx="11" cy="6.5" r="5.3" stroke="#111" stroke-width="1.3" fill="none"/><path d="M7.2 10.3L1 16.5" stroke="#111" stroke-width="1.4"/></svg>
<div class="t" style="left:88px;top:1053px;font-size:14.6px;font-weight:400;color:#222;letter-spacing:0px;">Type here to search</div>
<svg style="left:255px;top:1038px" width="81" height="42"><defs><linearGradient id="ice" x1="0" y1="0" x2="1" y2="1"><stop offset="0" stop-color="#dce9fa"/><stop offset="0.5" stop-color="#9fc0df"/><stop offset="1" stop-color="#c9dcf2"/></linearGradient><radialGradient id="bear" cx="0.45" cy="0.3" r="0.8"><stop offset="0" stop-color="#f6effa"/><stop offset="0.6" stop-color="#d8cbe6"/><stop offset="1" stop-color="#a896c0"/></radialGradient></defs>
<path d="M10 42C12 34 30 30 45 26C60 22 72 21 81 21V42Z" fill="url(#ice)"/>
<path d="M22 34L23 40H28L28 32M35 33L35 38H40L40 31M45 26L47 36H51L51 27M55 24L58 33H62L61 24" fill="#c4b5da" stroke="#c4b5da" stroke-width="3" stroke-linejoin="round"/>
<path d="M21 12Q24 7 34 9Q46 8 54 11Q59 15 58 24Q52 29 44 28Q36 30 30 29Q22 28 21 20Z" fill="url(#bear)"/>
<path d="M22 22L22 34H29L31 26M33 26L34 34H40L40 26" fill="#d8cbe6"/>
<ellipse cx="27" cy="9" rx="7.5" ry="6.5" fill="url(#bear)"/><circle cx="21" cy="4.5" r="2.4" fill="#e0d5ec"/><circle cx="33" cy="4.5" r="2.4" fill="#e0d5ec"/>
<circle cx="25" cy="8.5" r="0.8" fill="#553"/><circle cx="30" cy="8.5" r="0.8" fill="#553"/><ellipse cx="27.5" cy="11.5" rx="1.5" ry="1" fill="#222"/></svg>
<svg style="left:351px;top:1051px" width="18" height="17"><path d="M1 1.5H11M1 15.5H11M2.5 4V13M9.5 4V13M2.5 4H9.5M2.5 13H9.5" stroke="#fff" stroke-width="1.4" fill="none"/><path d="M15.5 1V16" stroke="#fff" stroke-width="1.4"/><rect x="13.5" y="4" width="4" height="3.5" fill="#fff"/></svg>
<svg style="left:400px;top:1050px" width="22" height="19"><path d="M0.5 1.5H8L10 3.5H21.5V18.5H0.5Z" fill="#f4c247"/><path d="M0.5 5H21.5V18.5H0.5Z" fill="#ffd867"/><path d="M5.5 12H16.5V18.5H13.5V15H8.5V18.5H5.5Z" fill="#2c8ee6"/></svg>
<svg style="left:447px;top:1048px" width="23" height="22"><circle cx="9" cy="4" r="3.5" fill="#7b83eb"/><circle cx="18.5" cy="6" r="2.8" fill="#5059c9"/><path d="M13 9H22V17A4.5 4.5 0 0 1 13 17Z" fill="#5059c9"/><path d="M4 9H16V17A6 6 0 0 1 4 17Z" fill="#7b83eb"/><rect x="0.5" y="10" width="10" height="10" rx="1.5" fill="#4b53bc"/><path d="M3 12.5H8M5.5 12.5V18" stroke="#fff" stroke-width="1.6"/></svg>
<div class="a" style="left:485px;top:1040px;width:44px;height:40px;background:#5c5553;"></div>
<svg style="left:497px;top:1048px" width="26" height="26"><circle cx="12" cy="12" r="11.5" fill="#34a853"/><path d="M12 0.5A11.5 11.5 0 0 1 22 6.3H12Z" fill="#fbbc04"/><path d="M12 0.5A11.5 11.5 0 0 0 2 6.3L7 15Z" fill="#ea4335"/><path d="M22 6.3A11.5 11.5 0 0 1 12 23.5L17 15Z" fill="#fbbc04"/><circle cx="12" cy="12" r="5" fill="#fff"/><circle cx="12" cy="12" r="4" fill="#4285f4"/><circle cx="19" cy="19" r="7" fill="#0b4a3a"/><text x="15.6" y="22.5" font-size="9" font-weight="700" fill="#fff" font-family="Liberation Sans">R</text></svg>
<div class="a" style="left:530px;top:1040px;width:1px;height:40px;background:#4a4444;"></div>
<div class="a" style="left:546px;top:1048px;width:24px;height:24px;background:#1a1d26;"></div>
<svg style="left:549px;top:1050px" width="18" height="20"><defs><linearGradient id="ag" x1="0" y1="0" x2="0" y2="1"><stop offset="0" stop-color="#f0506e"/><stop offset="0.35" stop-color="#b070f0"/><stop offset="1" stop-color="#2f8cf2"/></linearGradient></defs><path d="M9 2.5C6 7 3.5 12 1.5 17.5M9 2.5C12 7 14.5 12 16.5 17.5" stroke="url(#ag)" stroke-width="2.8" fill="none" stroke-linecap="round"/><path d="M4.5 13Q9 9 13.5 13" stroke="#2f8cf2" stroke-width="1.5" fill="none"/></svg>
<div class="a" style="left:440px;top:1077px;width:40px;height:3px;background:#76b9ed;"></div>
<div class="a" style="left:485px;top:1077px;width:44px;height:3px;background:#76b9ed;"></div>
<div class="a" style="left:538px;top:1077px;width:40px;height:3px;background:#76b9ed;"></div>
<svg style="left:1522px;top:1048px" width="24" height="22"><defs><radialGradient id="sun" cx="0.4" cy="0.35" r="0.7"><stop offset="0" stop-color="#ffd400"/><stop offset="1" stop-color="#f08a00"/></radialGradient></defs><circle cx="10.5" cy="12" r="10" fill="url(#sun)"/></svg>
<svg style="left:1532px;top:1046px" width="13" height="13"><circle cx="6.5" cy="6.5" r="6.2" fill="#d9322e"/><text x="3.6" y="10.2" font-size="9.5" font-weight="700" fill="#fff" font-family="Liberation Sans">6</text></svg>
<div class="t" style="left:1552px;top:1054px;font-size:13.6px;font-weight:400;color:#fff;letter-spacing:0px;">32°C&nbsp;&nbsp;Sunny</div>
<svg style="left:1652px;top:1055px" width="14" height="9"><path d="M1 8L7 1.5L13 8" stroke="#fff" stroke-width="1.3" fill="none"/></svg>
<svg style="left:1677px;top:1051px" width="14" height="17"><path d="M3 2A3 3 0 0 0 3 15M10 2A3 3 0 0 1 10 15" stroke="#ddd" stroke-width="1.1" fill="none"/><rect x="3.5" y="5" width="6" height="7" rx="1" stroke="#ddd" stroke-width="1.2" fill="none"/><path d="M9.5 7L12 5.5V11.5L9.5 10" stroke="#ddd" stroke-width="1.1" fill="none"/></svg>
<svg style="left:1699px;top:1050px" width="18" height="18"><path d="M2 13A3 3 0 0 1 3 7.5A5 5 0 0 1 12.5 6A3.5 3.5 0 0 1 15 13Z" fill="#d8d8d8"/><circle cx="12.5" cy="13" r="4.5" fill="#1e88e5"/><path d="M12.5 11V15M12.5 9.6V10.2" stroke="#fff" stroke-width="1.3"/></svg>
<svg style="left:1723px;top:1051px" width="17" height="16"><rect x="1" y="3" width="14.5" height="9" stroke="#ddd" stroke-width="1.2" fill="none"/><path d="M8 12V15M4.5 15H11.5" stroke="#ddd" stroke-width="1.2"/><rect x="0.5" y="0.5" width="4" height="4" stroke="#ddd" stroke-width="1" fill="#3a3435"/></svg>
<svg style="left:1747px;top:1051px" width="17" height="16"><path d="M1 5.5H4L8 1.5V14.5L4 10.5H1Z" stroke="#ddd" stroke-width="1.2" fill="none"/><path d="M10.5 5.5L15.5 10.5M15.5 5.5L10.5 10.5" stroke="#ddd" stroke-width="1.2"/></svg>
<div class="t" style="left:1773px;top:1046px;font-size:11.4px;font-weight:400;color:#fff;letter-spacing:0px;">ENG</div>
<div class="t" style="left:1779px;top:1064px;font-size:11.4px;font-weight:400;color:#fff;letter-spacing:0px;">IN</div>
<div class="t" style="left:1815px;top:1046px;font-size:11.4px;font-weight:400;color:#fff;letter-spacing:0px;">5:05 PM</div>
<div class="t" style="left:1809px;top:1064px;font-size:11.4px;font-weight:400;color:#fff;letter-spacing:0px;">2/27/2026</div>
<svg style="left:1879px;top:1049px" width="18" height="16"><path d="M1 1H16V11H7L3.5 14V11H1Z" fill="#fff"/><path d="M4 4H13M4 6.5H13M4 9H11" stroke="#3a3435" stroke-width="1"/></svg>
<div class="a" style="left:1884px;top:1058px;width:22px;height:22px;border-radius:50%;background:#3a3435;border:1px solid #bbb"></div>
<div class="t" style="left:1888px;top:1064px;font-size:11px;font-weight:700;color:#fff;letter-spacing:0px;">30</div>
<div class="a" style="left:1916px;top:1040px;width:1px;height:40px;background:#6a6464;"></div>
</body></html>
